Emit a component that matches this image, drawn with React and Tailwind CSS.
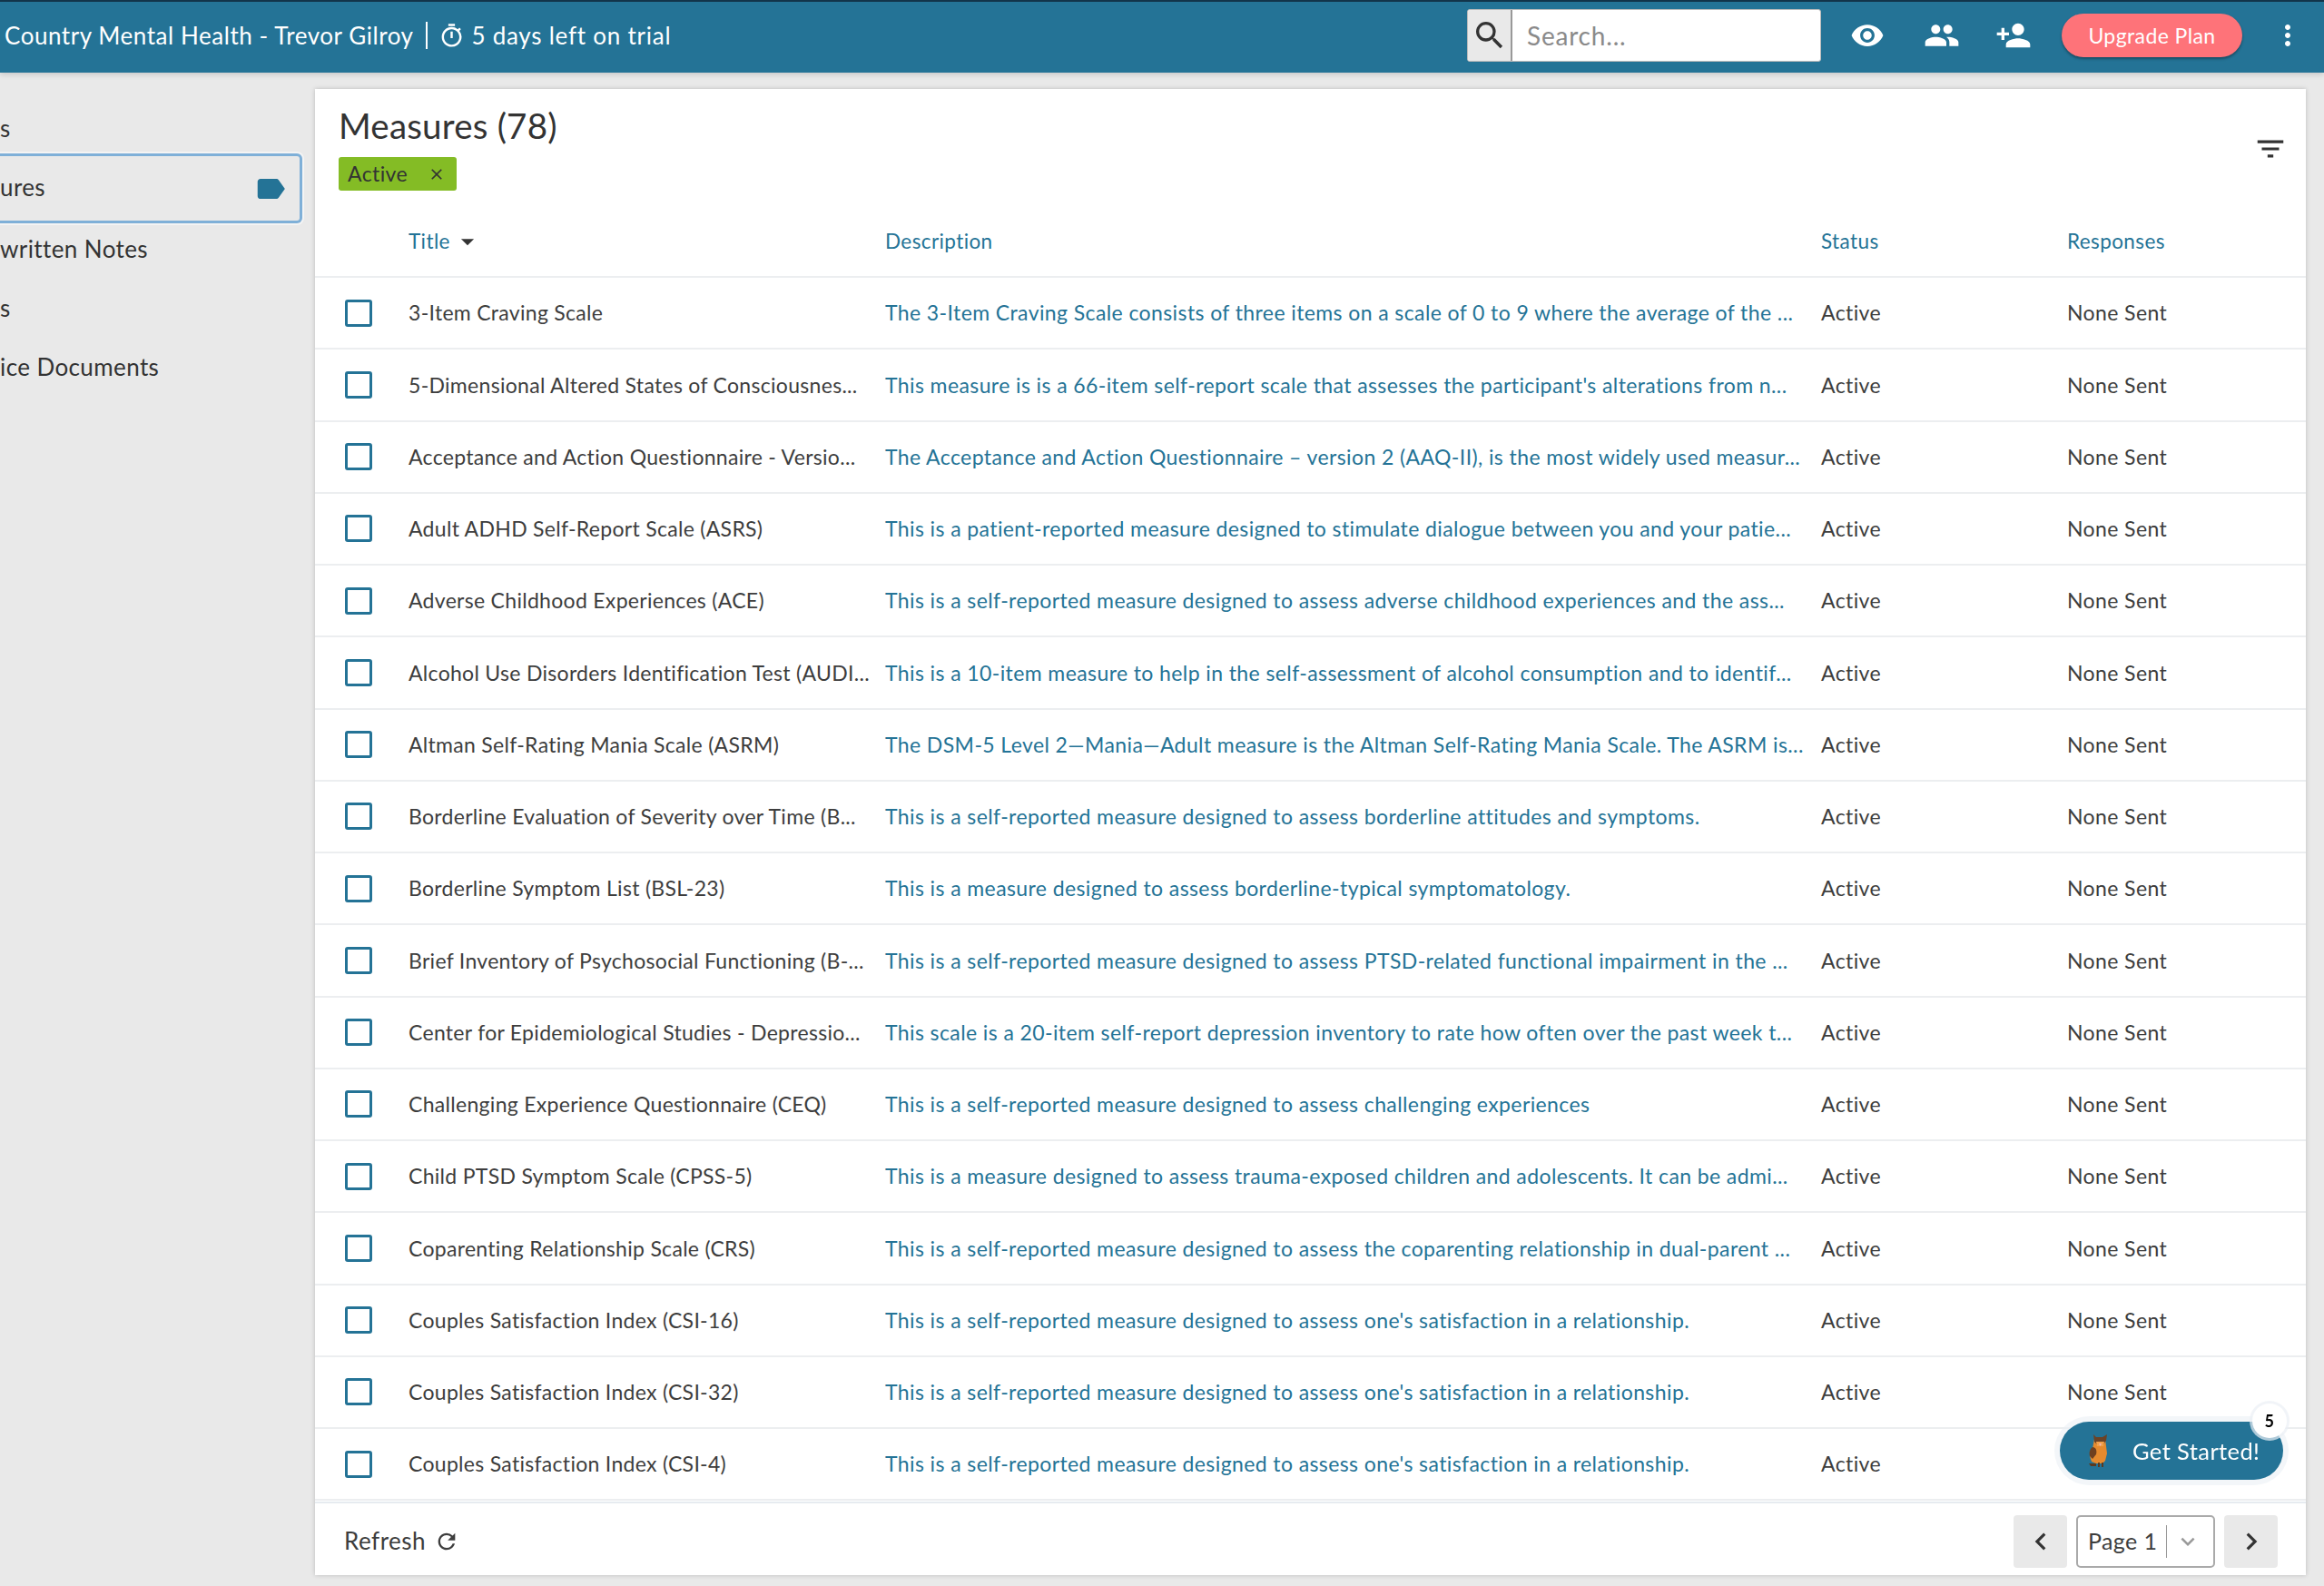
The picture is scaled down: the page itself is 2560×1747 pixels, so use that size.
import React from "react";
import {
  MdSearch,
  MdRemoveRedEye,
  MdPeople,
  MdPersonAdd,
  MdMoreVert,
  MdFilterList,
  MdLabel,
  MdClose,
  MdArrowDropDown,
  MdOutlineTimer,
  MdRefresh,
  MdChevronLeft,
  MdChevronRight,
  MdExpandMore,
} from "react-icons/md";

const measures = [
  ["3-Item Craving Scale", "The 3-Item Craving Scale consists of three items on a scale of 0 to 9 where the average of the ..."],
  ["5-Dimensional Altered States of Consciousnes...", "This measure is is a 66-item self-report scale that assesses the participant's alterations from n..."],
  ["Acceptance and Action Questionnaire - Versio...", "The Acceptance and Action Questionnaire – version 2 (AAQ-II), is the most widely used measur..."],
  ["Adult ADHD Self-Report Scale (ASRS)", "This is a patient-reported measure designed to stimulate dialogue between you and your patie..."],
  ["Adverse Childhood Experiences (ACE)", "This is a self-reported measure designed to assess adverse childhood experiences and the ass..."],
  ["Alcohol Use Disorders Identification Test (AUDI...", "This is a 10-item measure to help in the self-assessment of alcohol consumption and to identif..."],
  ["Altman Self-Rating Mania Scale (ASRM)", "The DSM-5 Level 2—Mania—Adult measure is the Altman Self-Rating Mania Scale. The ASRM is..."],
  ["Borderline Evaluation of Severity over Time (B...", "This is a self-reported measure designed to assess borderline attitudes and symptoms."],
  ["Borderline Symptom List (BSL-23)", "This is a measure designed to assess borderline-typical symptomatology."],
  ["Brief Inventory of Psychosocial Functioning (B-...", "This is a self-reported measure designed to assess PTSD-related functional impairment in the ..."],
  ["Center for Epidemiological Studies - Depressio...", "This scale is a 20-item self-report depression inventory to rate how often over the past week t..."],
  ["Challenging Experience Questionnaire (CEQ)", "This is a self-reported measure designed to assess challenging experiences"],
  ["Child PTSD Symptom Scale (CPSS-5)", "This is a measure designed to assess trauma-exposed children and adolescents. It can be admi..."],
  ["Coparenting Relationship Scale (CRS)", "This is a self-reported measure designed to assess the coparenting relationship in dual-parent ..."],
  ["Couples Satisfaction Index (CSI-16)", "This is a self-reported measure designed to assess one's satisfaction in a relationship."],
  ["Couples Satisfaction Index (CSI-32)", "This is a self-reported measure designed to assess one's satisfaction in a relationship."],
  ["Couples Satisfaction Index (CSI-4)", "This is a self-reported measure designed to assess one's satisfaction in a relationship."],
];

const Owl = () => (
  <svg width="24" height="38" viewBox="0 0 24 38">
    <path d="M7 6h12l1 8 1 8-2 8-3 3H9l-5-2-2-6 3-8z" fill="#e58a2e" />
    <path d="M6 1l3 3h7l5-3-1 7-3 4H10L7 9z" fill="#6b4226" />
    <path d="M9 9h9l-1 5h-7z" fill="#f0a04a" />
    <path d="M5 15c4 0 5 4 4 8l-4 5-3-3c-1-4 0-8 3-10z" fill="#6e3f1f" />
    <path d="M12 11h3l-1.500 3z" fill="#f3b7b7" />
    <path d="M1 33h8v3H3zM11 32h2v5h-2zM15 32h2v5h-2z" fill="#5a3a20" />
  </svg>
);

const SideItem = ({ label, className }) => (
  <div className={`text-[26px] leading-none text-[#333] tracking-[0.4px] ${className}`}>{label}</div>
);

const App = () => {
  return (
    <div className="w-[2560px] h-[1747px] bg-[#e9e9e9] overflow-hidden flex flex-col font-['Lato',sans-serif]">
      <header className="h-[80px] shrink-0 bg-[#247396] border-t-2 border-[#12344a] flex items-center pl-[5px] pr-[22px] pb-[4px] text-white shadow-[0_2px_6px_rgba(0,0,0,0.15)]">
        <span className="text-[26px] tracking-[0.55px] whitespace-nowrap">Country Mental Health - Trevor Gilroy</span>
        <span className="ml-[14px] h-[30px] w-[2px] bg-white" />
        <MdOutlineTimer className="ml-[12px] text-[29px]" />
        <span className="ml-[7px] text-[26px] tracking-[0.75px] whitespace-nowrap">5 days left on trial</span>
        <div className="ml-auto flex items-center">
          <div className="flex h-[58px] w-[390px] rounded-[3px] overflow-hidden border border-[#bbb] bg-white">
            <div className="w-[49px] bg-[#e9e9e9] border-r-2 border-[#999] flex items-center justify-center">
              <MdSearch className="text-[40px] text-[#333]" />
            </div>
            <span className="pl-[16px] self-center text-[28px] text-[#8a8a8a] tracking-[0.8px]">Search...</span>
          </div>
          <MdRemoveRedEye className="ml-[32px] text-[38px]" />
          <MdPeople className="ml-[43px] text-[40px]" />
          <MdPersonAdd className="ml-[39px] text-[40px]" />
          <button className="ml-[33px] w-[199px] h-[48px] rounded-full bg-[#fe7379] text-[23px] tracking-[0.4px] text-white shadow-[0_2px_3px_rgba(0,0,0,0.35)]">
            Upgrade Plan
          </button>
          <MdMoreVert className="ml-[32px] text-[36px]" />
        </div>
      </header>

      <div className="flex flex-1 min-h-0 pt-[18px] pr-[20px] pb-[12px]">
        <aside className="w-[347px] shrink-0 pt-[30px] pr-[14px]">
          <SideItem label="s" />
          <div className="mt-[15px] h-[77px] flex items-center justify-between border-[3px] border-l-0 border-[#7fb0d8] rounded-r-[6px] pr-[13px] pb-[4px] shadow-[0_0_0_2px_#f4f4f4]">
            <SideItem label="ures" />
            <MdLabel className="text-[38px] text-[#247396] translate-y-[2px]" />
          </div>
          <SideItem label="written Notes" className="mt-[15px]" />
          <SideItem label="s" className="mt-[39px]" />
          <SideItem label="ice Documents" className="mt-[39px]" />
        </aside>

        <main className="flex-1 min-w-0 bg-white shadow-[0_0_5px_rgba(0,0,0,0.2)] flex flex-col text-[#3d3d3d]">
          <div className="relative h-[150px] shrink-0 pl-[26px] pt-[15px]">
            <h1 className="text-[38.5px] leading-[50px] tracking-[0.2px] text-[#333]">Measures (78)</h1>
            <div className="mt-[10px] w-[130px] h-[37px] bg-[#84bc25] rounded-[3px] flex items-center pl-[10px] text-[23px] text-[#333] tracking-[0.4px]">
              Active
              <MdClose className="ml-auto mr-[12px] text-[20px]" />
            </div>
            <MdFilterList className="absolute right-[20px] top-[47px] text-[38px] text-[#333]" />
          </div>

          <div className="grid grid-cols-[103px_525px_1031px_271px_1fr] items-center h-[56px] pb-[20px] shrink-0 text-[22.500px] text-[#247396] tracking-[0.4px]">
            <span />
            <span className="flex items-center">
              Title
              <MdArrowDropDown className="ml-[2px] text-[34px] text-[#333]" />
            </span>
            <span>Description</span>
            <span>Status</span>
            <span>Responses</span>
          </div>

          <div className="flex-1 min-h-0 border-t-2 border-[#eceef0]">
            {measures.map(([title, description]) => (
              <div
                key={title}
                className="grid grid-cols-[103px_525px_1031px_271px_1fr] items-center h-[79.25px] border-b-2 border-[#eceef0] text-[23px] tracking-[0.4px] whitespace-nowrap"
              >
                <span className="ml-[33px] w-[30px] h-[30px] border-[3px] border-[#247396] rounded-[3px]" />
                <span className="tracking-[0.3px]">{title}</span>
                <span className="text-[#247396]">{description}</span>
                <span>Active</span>
                <span>None Sent</span>
              </div>
            ))}
          </div>

          <footer className="h-[81px] shrink-0 border-t-2 border-[#e6ebf0] flex items-center pl-[32px] pr-[31px] pt-[4px]">
            <span className="text-[26px] tracking-[0.5px]">Refresh</span>
            <MdRefresh className="ml-[9px] text-[28px]" />
            <div className="ml-auto flex items-center gap-[10px]">
              <button className="w-[59px] h-[58px] bg-[#e9e9e9] rounded-[4px] flex items-center justify-center">
                <MdChevronLeft className="text-[38px] text-[#333]" />
              </button>
              <div className="w-[153px] h-[58px] border-2 border-[#aaa] rounded-[5px] flex items-center pl-[11px] text-[25px] tracking-[0.4px]">
                Page 1
                <span className="ml-[10px] h-[36px] w-[1px] bg-[#999]" />
                <MdExpandMore className="ml-[8px] text-[30px] text-[#999]" />
              </div>
              <button className="w-[59px] h-[58px] bg-[#e9e9e9] rounded-[4px] flex items-center justify-center">
                <MdChevronRight className="text-[38px] text-[#333]" />
              </button>
            </div>
          </footer>
        </main>
      </div>

      <div className="fixed left-[2269px] top-[1566px] w-[246px] h-[64px] rounded-full bg-[#247396] flex items-center pl-[31px] text-white text-[25.5px] tracking-[0.4px] shadow-[0_0_0_6px_rgba(235,240,245,0.6)]">
        <Owl />
        <span className="ml-[25px]">Get Started!</span>
        <span className="absolute right-[-4px] top-[-20px] w-[38px] h-[38px] rounded-full bg-white text-black text-[18px] font-bold flex items-center justify-center shadow-[0_0_0_3px_rgba(235,240,245,0.7)]">
          5
        </span>
      </div>
    </div>
  );
};

export default App;
